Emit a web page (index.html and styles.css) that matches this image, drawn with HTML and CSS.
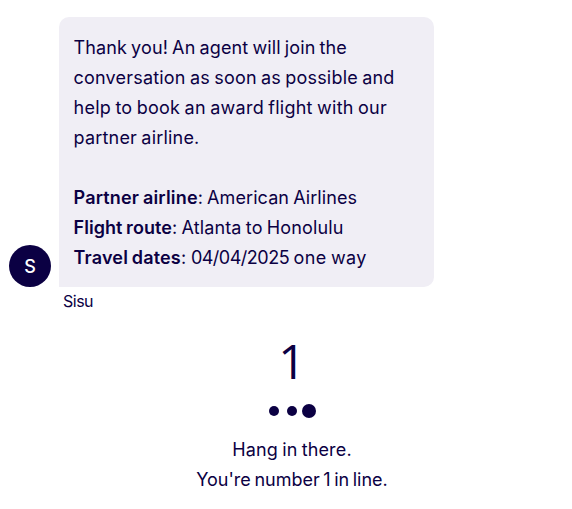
FILE: index.html
```
<!DOCTYPE html>
<html lang="en">
<head>
  <meta charset="UTF-8">
  <title>Chat</title>
  <link rel="stylesheet" href="styles.css">
</head>
<body>
  <div class="message">
    <div class="avatar">S</div>
    <div class="bubble">
      <div class="line line-1">Thank you! An agent will join the</div>
      <div class="line line-2">conversation as soon as possible and</div>
      <div class="line line-3">help to book an award flight with our</div>
      <div class="line line-4">partner airline.</div>
      <br>
      <div class="line line-5"><b>Partner airline</b>: American Airlines</div>
      <div class="line line-6"><b>Flight route</b>: Atlanta to Honolulu</div>
      <div class="line line-7"><b>Travel dates</b>: <span class="date">04/04/2025</span> one way</div>
    </div>
  </div>
  <div class="sender">Sisu</div>

  <div class="queue">
    <div class="position">1</div>
    <div class="dots">
      <span class="dot"></span>
      <span class="dot"></span>
      <span class="dot dot-active"></span>
    </div>
    <div class="line line-8">Hang in there.</div>
    <div class="line line-9">You're number 1 in line.</div>
  </div>
</body>
</html>
```
FILE: styles.css
```
body {
  margin: 0;
  background-color: white;
  color: #0b0043;
  font-family: Inter, "Open Sans", sans-serif;
  font-size: 18px;
  line-height: 30px;
}
.message {
  display: flex;
  align-items: flex-end;
  gap: 8px;
  padding: 17px 0 0 9px;
}
.avatar {
  width: 42px;
  height: 42px;
  border-radius: 50%;
  background-color: #0b0043;
  color: white;
  font-weight: 500;
  line-height: 43px;
  text-align: center;
}
.bubble {
  box-sizing: border-box;
  width: 375px;
  height: 270px;
  padding: 16px 14px 14px 14.5px;
  border-radius: 10px 10px 10px 0;
  background-color: #f0eef5;
}
.line {
  white-space: nowrap;
  word-spacing: -1px;
}
.line-1 {
  letter-spacing: 0.11px;
}
.line-2 {
  letter-spacing: 0.2px;
}
.line-3 {
  letter-spacing: 0.26px;
}
.line-4 {
  letter-spacing: 0.2px;
}
.line-5 {
  letter-spacing: 0.08px;
}
.line-6 {
  letter-spacing: 0.14px;
}
.line-7 {
  letter-spacing: 0.35px;
}
.line-8 {
  letter-spacing: 0.14px;
}
.line-9 {
  word-spacing: -1.5px;
}
b {
  font-weight: 600;
  letter-spacing: 0.18px;
}
.line-6 b {
  letter-spacing: 0.06px;
}
.date {
  letter-spacing: -0.5px;
}
.sender {
  padding-left: 63px;
  font-size: 16px;
  line-height: 28px;
  letter-spacing: -0.5px;
}
.queue {
  display: flex;
  flex-direction: column;
  align-items: center;
  padding-left: 12px;
}
.position {
  margin-top: 16px;
  font-family: "Open Sans", sans-serif;
  font-size: 48px;
  line-height: 60px;
}
.dots {
  display: flex;
  align-items: center;
  height: 16px;
  gap: 8px;
  margin: 12px 0 16px;
  padding-left: 1px;
}
.dot {
  width: 10px;
  height: 10px;
  border-radius: 50%;
  background-color: #0b0043;
}
.dot-active {
  width: 14px;
  height: 14px;
  margin-left: -3px;
}
```
